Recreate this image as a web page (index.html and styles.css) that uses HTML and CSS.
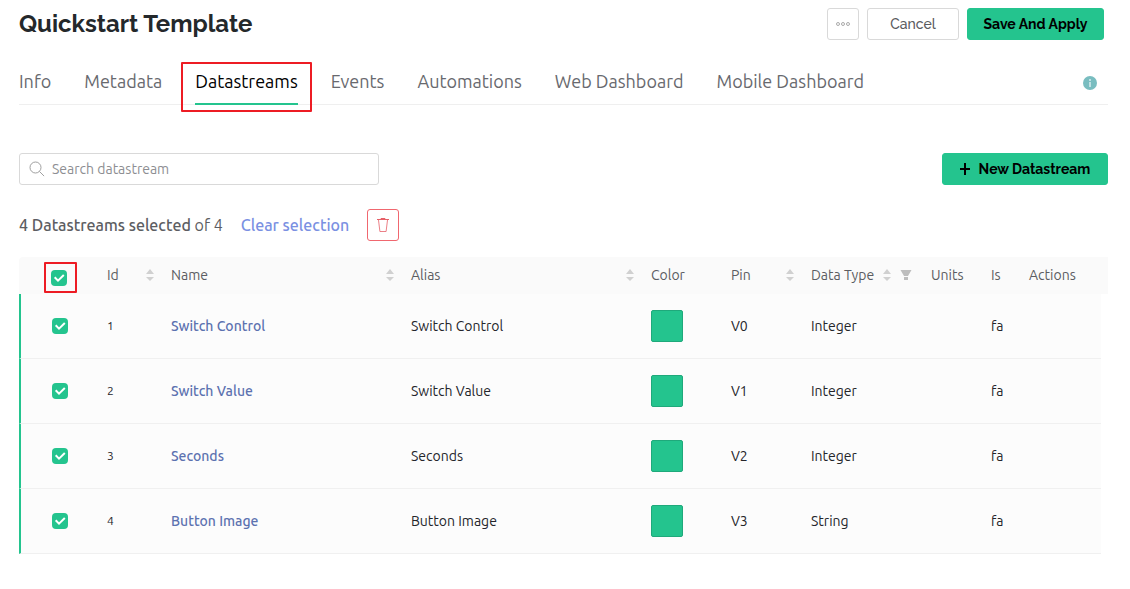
FILE: index.html
```
<!DOCTYPE html>
<html lang="en">
<head>
<meta charset="utf-8">
<meta name="viewport" content="width=device-width, initial-scale=1">
<title>Quickstart Template</title>
<link rel="stylesheet" href="styles.css">
</head>
<body>
<svg class="sprite" aria-hidden="true">
  <symbol id="sort" viewBox="0 0 8 14"><path d="M4 1l4 5H0zM4 13l4-4H0z" fill="currentColor"/></symbol>
</svg>
<main class="page">
  <header class="header">
    <h1 class="title">Quickstart Template</h1>
    <div class="actions">
      <button class="btn btn-icon" type="button" aria-label="More actions">
        <svg width="14" height="6" viewBox="0 0 14 6" fill="none" stroke="#888"><circle cx="2" cy="3" r="1.5" stroke-width=".7"/><circle cx="7" cy="3" r="1.5" stroke-width=".7"/><circle cx="12" cy="3" r="1.5" stroke-width=".7"/></svg>
      </button>
      <button class="btn btn-cancel" type="button">Cancel</button>
      <button class="btn btn-primary btn-save" type="button">Save And Apply</button>
    </div>
  </header>

  <nav class="tabs">
    <a class="tab" href="#info">Info</a>
    <a class="tab" href="#metadata">Metadata</a>
    <a class="tab active" href="#datastreams" aria-current="page">Datastreams<span class="frame frame-tab"></span></a>
    <a class="tab" href="#events">Events</a>
    <a class="tab" href="#automations">Automations</a>
    <a class="tab" href="#web">Web Dashboard</a>
    <a class="tab" href="#mobile">Mobile Dashboard</a>
    <button class="info" type="button" aria-label="Help">
      <svg width="14" height="14" viewBox="0 0 14 14"><circle cx="7" cy="7" r="7" fill="#79bdc0"/><path d="M7 3v2M7 6v5" stroke="#d3eaeb" stroke-width="1.6"/></svg>
    </button>
  </nav>

  <div class="toolbar">
    <label class="search">
      <svg width="16" height="16" viewBox="0 0 16 16" fill="none" stroke="#888"><circle cx="6.5" cy="6.5" r="5.5" stroke-width=".8"/><path d="M10.5 10.5l4.6 4.6" stroke-width=".8"/></svg>
      <input type="text" placeholder="Search datastream" aria-label="Search datastream">
    </label>
    <button class="btn btn-primary btn-new" type="button">
      <svg width="10" height="12" viewBox="0 0 10 12"><path d="M5 0v12M0 6h10" stroke="#000" stroke-width="2"/></svg>
      New Datastream
    </button>
  </div>

  <div class="selection">
    <span class="count"><b>4 Datastreams selected</b> of 4</span>
    <button class="clear" type="button">Clear selection</button>
    <button class="btn btn-icon btn-delete" type="button" aria-label="Delete selected">
      <svg width="14" height="16" viewBox="0 0 14 16" fill="none" stroke="#e66068"><path d="M1 2.5h12M5 2.5v-1h4v1" /><path d="M2.5 3l1.4 11.5h6.2L11.5 3" stroke-width=".8"/></svg>
    </button>
  </div>

  <table class="grid">
    <colgroup>
      <col class="c-check"><col class="c-id"><col><col><col class="c-color"><col class="c-pin"><col class="c-type"><col class="c-units"><col class="c-is"><col class="c-actions"><col class="c-scroll">
    </colgroup>
    <thead>
      <tr>
        <th class="check check-all"><span class="box-wrap"><input type="checkbox" checked aria-label="Select all"><span class="frame frame-check"></span></span></th>
        <th><div class="head">Id<button class="sort" type="button" aria-label="Sort by id"><svg><use href="#sort"/></svg></button></div></th>
        <th><div class="head">Name<button class="sort" type="button" aria-label="Sort by name"><svg><use href="#sort"/></svg></button></div></th>
        <th><div class="head">Alias<button class="sort" type="button" aria-label="Sort by alias"><svg><use href="#sort"/></svg></button></div></th>
        <th>Color</th>
        <th><div class="head">Pin<button class="sort" type="button" aria-label="Sort by pin"><svg><use href="#sort"/></svg></button></div></th>
        <th><div class="head head-type">Data Type<button class="sort" type="button" aria-label="Sort by data type"><svg><use href="#sort"/></svg></button><button class="filter" type="button" aria-label="Filter data types"><svg width="12" height="10" viewBox="0 0 12 10" fill="#bdbdbd"><path d="M.5 0h11L8 6H4zM4 7h4v3H4z"/></svg></button></div></th>
        <th>Units</th>
        <th>Is</th>
        <th colspan="2">Actions</th>
      </tr>
    </thead>
    <tbody>
      <tr>
        <td class="check"><span class="box-wrap"><input type="checkbox" checked aria-label="Select Switch Control"></span></td>
        <td class="id">1</td><td><a href="#1">Switch Control</a></td><td>Switch Control</td><td><span class="swatch"></span></td><td>V0</td><td>Integer</td><td></td><td>fa</td><td></td>
      </tr>
      <tr>
        <td class="check"><span class="box-wrap"><input type="checkbox" checked aria-label="Select Switch Value"></span></td>
        <td class="id">2</td><td><a href="#2">Switch Value</a></td><td>Switch Value</td><td><span class="swatch"></span></td><td>V1</td><td>Integer</td><td></td><td>fa</td><td></td>
      </tr>
      <tr>
        <td class="check"><span class="box-wrap"><input type="checkbox" checked aria-label="Select Seconds"></span></td>
        <td class="id">3</td><td><a href="#3">Seconds</a></td><td>Seconds</td><td><span class="swatch"></span></td><td>V2</td><td>Integer</td><td></td><td>fa</td><td></td>
      </tr>
      <tr>
        <td class="check"><span class="box-wrap"><input type="checkbox" checked aria-label="Select Button Image"></span></td>
        <td class="id">4</td><td><a href="#4">Button Image</a></td><td>Button Image</td><td><span class="swatch"></span></td><td>V3</td><td>String</td><td></td><td>fa</td><td></td>
      </tr>
    </tbody>
  </table>
</main>
</body>
</html>
```
FILE: styles.css
```
* { box-sizing: border-box; }
body {
  margin: 0;
  background: #fff;
  color: #24252a;
  font: 14px/20px Ubuntu, "Noto Sans", sans-serif;
}
button, input { font: inherit; color: inherit; margin: 0; }
button { background: none; border: 0; padding: 0; cursor: pointer; }
a { text-decoration: none; }
svg { display: block; flex: none; }
.sprite { position: absolute; width: 0; height: 0; }
.page { padding: 8px 22px 32px 19px; }

.header { display: flex; align-items: center; justify-content: space-between; padding-right: 4px; }
.title {
  margin: 0;
  font: 700 24px/32px Raleway, Inter, sans-serif;
  color: #24282b;
}
.actions { display: flex; gap: 8px; }
.btn {
  display: flex;
  align-items: center;
  justify-content: center;
  height: 32px;
  border: 1px solid #d9d9d9;
  border-radius: 3px;
  font: 500 14px/20px Raleway, Inter, sans-serif;
  color: #5a5b60;
  white-space: nowrap;
}
.btn-icon { width: 32px; }
.btn-cancel { width: 92px; }
.btn-primary { background: #24c48e; border-color: #24c48e; color: #000; font-weight: 700; }
.btn-save { width: 137px; }
.btn-new { width: 166px; gap: 9px; }

.tabs {
  display: flex;
  gap: 33px;
  margin-top: 20px;
  height: 45px;
  border-bottom: 1px solid #efefef;
  font-size: 18px;
  line-height: 24px;
}
.tab { position: relative; height: 45px; padding-top: 9px; color: #68696e; white-space: nowrap; }
.active { color: #000; border-bottom: 2px solid #24c48e; }
.info { margin: 2px 11px 0 auto; }
.frame { position: absolute; border: 2px solid #ed1c24; border-radius: 1px; pointer-events: none; }
.frame-tab { inset: 2px -14px -9px; }
.frame-check { inset: -8px -10px -7px -7px; }

.toolbar { display: flex; justify-content: space-between; margin-top: 48px; }
.search {
  display: flex;
  align-items: center;
  gap: 7px;
  width: 360px;
  height: 32px;
  padding: 0 9px;
  border: 1px solid #d9d9d9;
  border-radius: 3px;
}
.search input { flex: 1; min-width: 0; border: 0; outline: 0; padding: 0; background: none; }
.search input::placeholder { color: #8d8e92; opacity: 1; }

.selection { display: flex; align-items: center; gap: 18px; margin: 24px 0 16px; font-size: 16px; color: #5c5d62; }
.selection b { font-weight: 500; }
.clear { color: #7a90e2; font-weight: 500; }
.btn-delete { border-color: #f0676f; }

.grid { width: 100%; table-layout: fixed; border-collapse: separate; border-spacing: 0; }
.c-check { width: 80px; }
.c-id { width: 64px; }
.c-color, .c-pin { width: 80px; }
.c-type { width: 120px; }
.c-units { width: 60px; }
.c-is { width: 38px; }
.c-actions { width: 80px; }
.c-scroll { width: 7px; }
th, td { padding: 0 8px; text-align: left; white-space: nowrap; }
th { height: 37px; padding-bottom: 1px; background: #fafafa; font-weight: 400; color: #5c5d62; }
th:first-child { border-top-left-radius: 4px; }
td { height: 65px; background: #fcfcfc; border-bottom: 1px solid #f0f0f0; }
td.check { border-left: 2px solid #24c48e; padding-left: 31px; }
th.check { padding: 5px 0 0 32px; }
.id { font-size: 12px; }
td a { color: #5c72b0; font-weight: 500; }
.head { display: flex; align-items: center; justify-content: space-between; padding-right: 1px; }
.head-type { justify-content: flex-start; gap: 9px; padding: 0; }
.sort { color: #d0d0d0; }
.sort svg { width: 8px; height: 14px; }
.box-wrap { position: relative; display: block; width: 16px; height: 16px; }
.box-wrap input {
  appearance: none;
  display: block;
  width: 16px;
  height: 16px;
  border-radius: 4px;
  background: #24c48e;
}
.box-wrap input:checked {
  background: #24c48e url("data:image/svg+xml,%3Csvg xmlns='http://www.w3.org/2000/svg' viewBox='0 0 16 16'%3E%3Cpath d='M3.7 7.3l3.3 3.3L12.8 5' fill='none' stroke='white' stroke-width='2'/%3E%3C/svg%3E");
}
.swatch { display: block; width: 32px; height: 32px; background: #24c48e; border: 1px solid #1fa97b; border-radius: 2px; }
```
